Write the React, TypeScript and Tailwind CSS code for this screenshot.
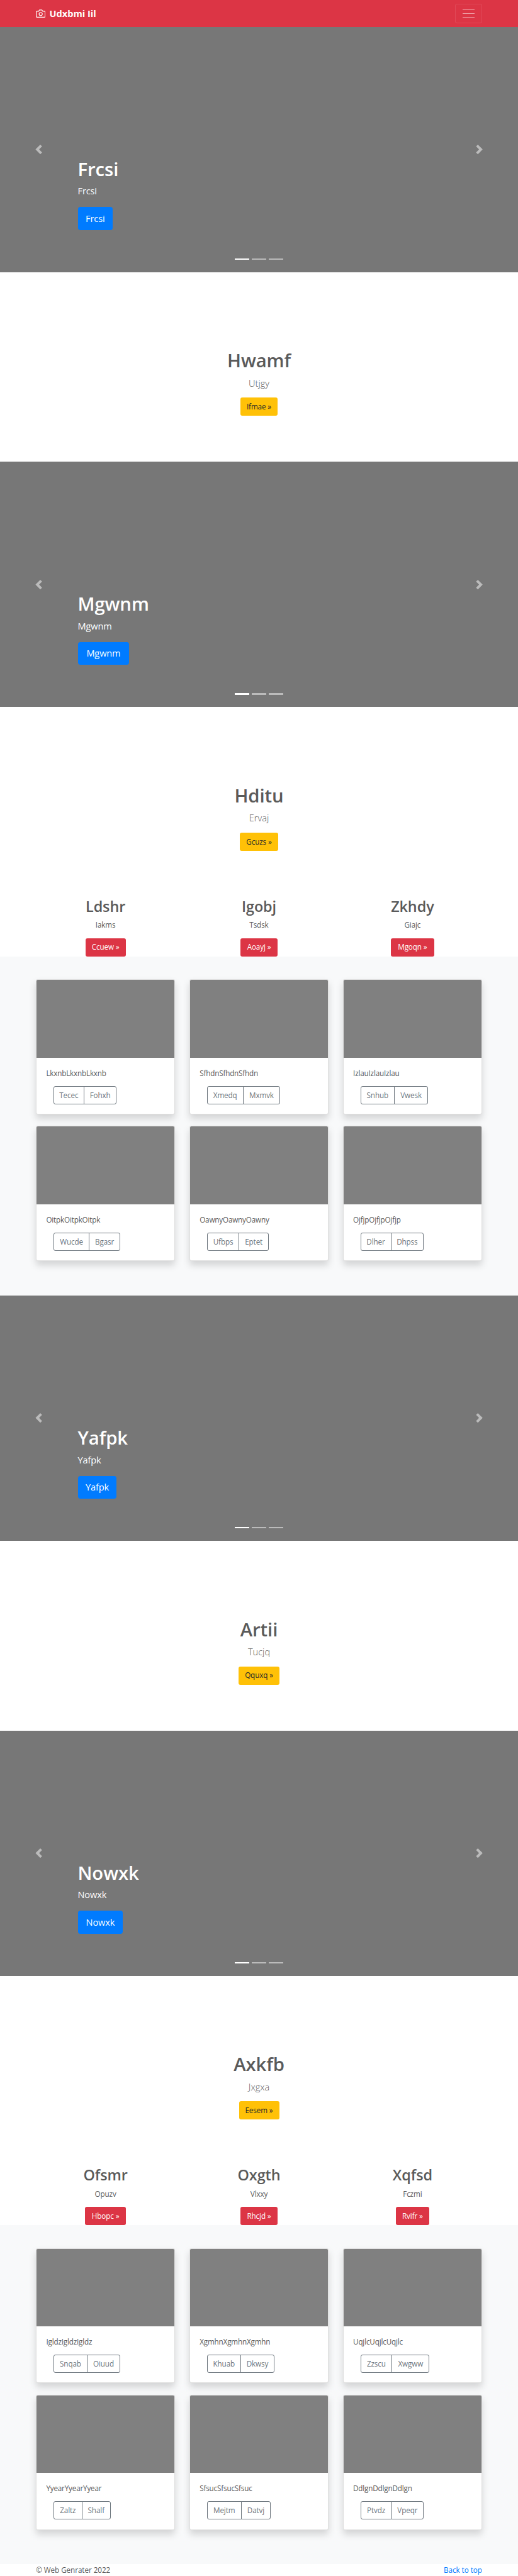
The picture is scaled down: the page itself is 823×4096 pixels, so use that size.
import React from "react";

type Action = { label: string; width: string };
type Feature = { title: string; text: string; action: Action };
type CardData = { text: string; first: Action; second: Action };

function NavBar() {
  return (
    <header className="flex h-[42.7px] items-center justify-between bg-[#dc3545] px-[57.2px]">
      <a className="flex items-center text-white">
        <svg
          className="mr-[6px] size-[15.3px]"
          viewBox="0 0 24 24"
          fill="none"
          stroke="currentColor"
          strokeWidth="1.8"
          strokeLinecap="round"
          strokeLinejoin="round"
        >
          <path d="M23 19a2 2 0 0 1-2 2H3a2 2 0 0 1-2-2V8a2 2 0 0 1 2-2h4l2-3h6l2 3h4a2 2 0 0 1 2 2z" />
          <circle cx="12" cy="13" r="4" />
        </svg>
        <strong className="text-[14.6px] leading-[22.9px] font-bold">Udxbmi Iil</strong>
      </a>
      <button className="flex h-[30.5px] w-[42.7px] flex-col items-center justify-center gap-[4.6px] rounded-[3px] border border-white/10">
        <span className="h-[1.5px] w-[18.3px] bg-white/50" />
        <span className="h-[1.5px] w-[18.3px] bg-white/50" />
        <span className="h-[1.5px] w-[18.3px] bg-white/50" />
      </button>
    </header>
  );
}

function Carousel({ title, width }: { title: string; width: string }) {
  return (
    <section className="relative h-[390px] bg-[#777777] px-[123.5px] pt-[208.1px] text-white">
      <h1 className="text-[29.3px] leading-[36.6px] font-semibold tracking-[-0.003em]">{title}</h1>
      <p className="mt-[4.9px] text-[14.6px] leading-[22.9px] tracking-[-0.01em]">{title}</p>
      <a
        className={`mt-[14px] flex h-[36.6px] items-center justify-center rounded-[3.7px] bg-[#007bff] text-[14.6px] tracking-[-0.01em] ${width}`}
      >
        {title}
      </a>
      <svg className="absolute top-[187.4px] left-[54.1px] size-[15.24px] opacity-50" viewBox="0 0 8 8" fill="#fff">
        <path d="M5.25 0l-4 4 4 4 1.5-1.5L4.25 4l2.5-2.5L5.25 0z" />
      </svg>
      <svg className="absolute top-[187.4px] right-[54.1px] size-[15.24px] opacity-50" viewBox="0 0 8 8" fill="#fff">
        <path d="M2.75 0l-1.5 1.5L3.75 4l-2.5 2.5L2.75 8l4-4-4-4z" />
      </svg>
      <div className="absolute inset-x-0 bottom-[19.8px] flex justify-center gap-[4.6px]">
        <span className="h-[2.3px] w-[22.8px] bg-white" />
        <span className="h-[2.3px] w-[22.8px] bg-white/50" />
        <span className="h-[2.3px] w-[22.8px] bg-white/50" />
      </div>
    </section>
  );
}

function Banner({ title, text, action }: Feature) {
  return (
    <section className="flex h-[301.7px] flex-col items-center pt-[122.7px]">
      <h1 className="text-[29.3px] leading-[36.6px] font-semibold tracking-[-0.003em]">{title}</h1>
      <p className="mt-[5.7px] text-[14.6px] leading-[22.9px] font-light">{text}</p>
      <a
        className={`mt-[11.7px] flex h-[29px] items-center justify-center rounded-[3px] bg-[#ffc107] text-[11.7px] tracking-[-0.01em] whitespace-nowrap text-[#212529] ${action.width}`}
      >
        {action.label} »
      </a>
    </section>
  );
}

function Features({ items }: { items: Feature[] }) {
  return (
    <section className="grid h-[94.7px] grid-cols-3 px-[45.7px]">
      {items.map((f) => (
        <div key={f.title} className="flex flex-col items-center pt-[0.7px]">
          <h2 className="text-[23.4px] leading-[29.3px] font-semibold tracking-[-0.003em]">{f.title}</h2>
          <p className="mt-[5.1px] text-[11.7px] leading-[18.3px] tracking-[-0.01em]">{f.text}</p>
          <a
            className={`mt-[12.2px] flex h-[29px] shrink-0 items-center justify-center rounded-[3px] bg-[#dc3545] text-[11.7px] tracking-[-0.01em] whitespace-nowrap text-white ${f.action.width}`}
          >
            {f.action.label} »
          </a>
        </div>
      ))}
    </section>
  );
}

function Card({ text, first, second }: CardData) {
  return (
    <article className="h-[214.8px] overflow-hidden rounded-[3px] border border-black/[.125] bg-white bg-clip-border shadow-[0_6.1px_12.2px_rgba(0,0,0,0.15)]">
      <div className="h-[123.4px] bg-[#808080]" />
      <div className="px-[15.2px] pt-[15px]">
        <p className="text-[11.7px] leading-[18.3px] tracking-[-0.015em]">{text}</p>
        <div className="mt-[12px] ml-[11.5px] flex h-[29px] text-[11.7px] tracking-[-0.01em] text-[#6c757d]">
          <button className={`rounded-l-[3px] border border-[#6c757d] ${first.width}`}>{first.label}</button>
          <button className={`-ml-px rounded-r-[3px] border border-[#6c757d] ${second.width}`}>{second.label}</button>
        </div>
      </div>
    </article>
  );
}

function Album({ cards }: { cards: CardData[] }) {
  return (
    <section className="grid h-[539.3px] grid-cols-3 content-start gap-x-[22.9px] gap-y-[18.3px] bg-[#f8f9fa] px-[57.2px] pt-[36.5px]">
      {cards.map((c) => (
        <Card key={c.text} {...c} />
      ))}
    </section>
  );
}

const featuresA: Feature[] = [
  { title: "Ldshr", text: "Iakms", action: { label: "Ccuew", width: "w-[64px]" } },
  { title: "Igobj", text: "Tsdsk", action: { label: "Aoayj", width: "w-[59.6px]" } },
  { title: "Zkhdy", text: "Giajc", action: { label: "Mgoqn", width: "w-[68.7px]" } },
];

const featuresB: Feature[] = [
  { title: "Ofsmr", text: "Opuzv", action: { label: "Hbopc", width: "w-[65.5px]" } },
  { title: "Oxgth", text: "Vlxxy", action: { label: "Rhcjd", width: "w-[59.8px]" } },
  { title: "Xqfsd", text: "Fczmi", action: { label: "Rvifr", width: "w-[53px]" } },
];

const cardsA: CardData[] = [
  { text: "LkxnbLkxnbLkxnb", first: { label: "Tecec", width: "w-[49px]" }, second: { label: "Fohxh", width: "w-[52.6px]" } },
  { text: "SfhdnSfhdnSfhdn", first: { label: "Xmedq", width: "w-[58px]" }, second: { label: "Mxmvk", width: "w-[59.5px]" } },
  { text: "IzlauIzlauIzlau", first: { label: "Snhub", width: "w-[54.5px]" }, second: { label: "Vwesk", width: "w-[54px]" } },
  { text: "OitpkOitpkOitpk", first: { label: "Wucde", width: "w-[57.5px]" }, second: { label: "Bgasr", width: "w-[49.5px]" } },
  { text: "OawnyOawnyOawny", first: { label: "Ufbps", width: "w-[51.7px]" }, second: { label: "Eptet", width: "w-[47.6px]" } },
  { text: "OjfjpOjfjpOjfjp", first: { label: "Dlher", width: "w-[49px]" }, second: { label: "Dhpss", width: "w-[52.6px]" } },
];

const cardsB: CardData[] = [
  { text: "IgldzIgldzIgldz", first: { label: "Snqab", width: "w-[54.2px]" }, second: { label: "Oiuud", width: "w-[52.8px]" } },
  { text: "XgmhnXgmhnXgmhn", first: { label: "Khuab", width: "w-[54.2px]" }, second: { label: "Dkwsy", width: "w-[54px]" } },
  { text: "UqjlcUqjlcUqjlc", first: { label: "Zzscu", width: "w-[50.7px]" }, second: { label: "Xwgww", width: "w-[60px]" } },
  { text: "YyearYyearYyear", first: { label: "Zaltz", width: "w-[46px]" }, second: { label: "Shalf", width: "w-[45.8px]" } },
  { text: "SfsucSfsucSfsuc", first: { label: "Mejtm", width: "w-[55px]" }, second: { label: "Datvj", width: "w-[47.5px]" } },
  { text: "DdlgnDdlgnDdlgn", first: { label: "Ptvdz", width: "w-[50px]" }, second: { label: "Vpeqr", width: "w-[51.6px]" } },
];

export default function App() {
  return (
    <div className="h-[4096px] w-[823px] overflow-hidden bg-white font-['Open_Sans','Noto_Sans',sans-serif] text-[#5a5a5a]">
      <NavBar />
      <Carousel title="Frcsi" width="w-[55.6px]" />
      <Banner title="Hwamf" text="Utjgy" action={{ label: "Ifmae", width: "w-[59.8px]" }} />
      <Carousel title="Mgwnm" width="w-[81.9px]" />
      <Banner title="Hditu" text="Ervaj" action={{ label: "Gcuzs", width: "w-[61px]" }} />
      <Features items={featuresA} />
      <Album cards={cardsA} />
      <Carousel title="Yafpk" width="w-[61.9px]" />
      <Banner title="Artii" text="Tucjq" action={{ label: "Qquxq", width: "w-[65px]" }} />
      <Carousel title="Nowxk" width="w-[71.9px]" />
      <Banner title="Axkfb" text="Jxgxa" action={{ label: "Eesem", width: "w-[64px]" }} />
      <Features items={featuresB} />
      <Album cards={cardsB} />
      <footer className="flex justify-between px-[57.2px] text-[11.7px] leading-[18.3px] tracking-[-0.005em]">
        <p>© Web Genrater 2022</p>
        <a className="text-[#007bff]">Back to top</a>
      </footer>
    </div>
  );
}
